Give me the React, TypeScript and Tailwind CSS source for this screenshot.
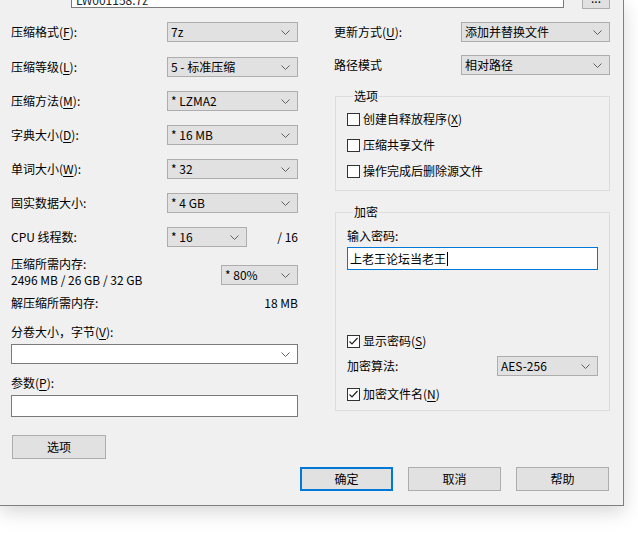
import React from "react";

const font = "font-['Noto_Sans_CJK_SC','Noto_Sans',sans-serif]";

function Chevron() {
    return (
        <svg width="9" height="5" viewBox="0 0 9 5" className="shrink-0">
            <polyline points="0.5,0.5 4.5,4.5 8.5,0.5" fill="none" stroke="#606060" strokeWidth="1" />
        </svg>
    );
}

function Combo({ value, width, white }: { value: string; width: string; white?: boolean }) {
    return (
        <div
            className={`flex items-center h-[20px] border pl-[3px] pr-[7px] ${width} ${
                white ? "bg-white border-[#7a7a7a]" : "bg-[#e1e1e1] border-[#adadad]"
            }`}
        >
            <span className="flex-1 whitespace-nowrap leading-[16px]">{value}</span>
            <Chevron />
        </div>
    );
}

function Key({ k }: { k: string }) {
    return (
        <>
            (<u className="underline-offset-2">{k}</u>)
        </>
    );
}

function CheckBox({ checked }: { checked?: boolean }) {
    return (
        <div className="w-[13px] h-[13px] border border-[#333333] bg-white shrink-0 flex items-center justify-center">
            {checked && (
                <svg width="11" height="11" viewBox="0 0 11 11">
                    <polyline points="1.5,5.5 4,8 9.5,2" fill="none" stroke="#222" strokeWidth="1.2" />
                </svg>
            )}
        </div>
    );
}

function CheckRow({ label, checked, className }: { label: React.ReactNode; checked?: boolean; className: string }) {
    return (
        <div className={`flex items-center h-[16px] gap-[3px] ${className}`}>
            <CheckBox checked={checked} />
            <span className="leading-[16px]">{label}</span>
        </div>
    );
}

function LeftRow({ label, value, className }: { label: React.ReactNode; value: string; className: string }) {
    return (
        <div className={`flex items-center h-[20px] ${className}`}>
            <span className="w-[156px] leading-[16px]">{label}</span>
            <Combo value={value} width="w-[131px]" />
        </div>
    );
}

function Button({ text, primary }: { text: string; primary?: boolean }) {
    return (
        <div
            className={`w-[93px] h-[24px] bg-[#e1e1e1] flex items-center justify-center ${
                primary ? "border-2 border-[#0078d7]" : "border border-[#adadad]"
            }`}
        >
            {text}
        </div>
    );
}

export default function App() {
    return (
        <div className={`w-[638px] h-[548px] bg-white overflow-hidden text-[12px] text-black ${font}`}>
            <div className="w-[624px] h-[506px] bg-[#f0f0f0] border-r border-b border-[#7f7f7f] shadow-[0_6px_18px_rgba(0,0,0,0.16)] overflow-hidden">
                {/* archive name row, mostly scrolled off */}
                <div className="flex items-end h-[20px] -mt-[12px]">
                    <div className="ml-[71px] w-[493px] h-[20px] bg-white border border-[#7a7a7a] flex items-end pl-[4px] pr-[8px]">
                        <span className="flex-1 leading-[14px] text-[#222]">LW001158.7z</span>
                        <span className="w-[2px] h-[2px] bg-[#555] mb-[9px]" />
                    </div>
                    <div className="ml-[18px] w-[28px] h-[22px] -mb-[1px] bg-[#e1e1e1] border border-[#adadad] flex items-end justify-center leading-[12px] pb-[4px]">
                        ...
                    </div>
                </div>

                <div className="flex">
                    {/* left column */}
                    <div className="ml-[11px] w-[287px] flex flex-col">
                        <LeftRow className="mt-[14px]" label={<>压缩格式<Key k="F" />:</>} value="7z" />
                        <LeftRow className="mt-[15px]" label={<>压缩等级<Key k="L" />:</>} value="5 - 标准压缩" />
                        <LeftRow className="mt-[14px]" label={<>压缩方法<Key k="M" />:</>} value="* LZMA2" />
                        <LeftRow className="mt-[14px]" label={<>字典大小<Key k="D" />:</>} value="* 16 MB" />
                        <LeftRow className="mt-[14px]" label={<>单词大小<Key k="W" />:</>} value="* 32" />
                        <LeftRow className="mt-[14px]" label="固实数据大小:" value="* 4 GB" />
                        <div className="flex items-center h-[20px] mt-[14px]">
                            <span className="w-[156px]">CPU 线程数:</span>
                            <Combo value="* 16" width="w-[80px]" />
                            <span className="ml-auto">/ 16</span>
                        </div>
                        <div className="flex items-start mt-[9px]">
                            <div className="flex flex-col leading-[16px]">
                                <span>压缩所需内存:</span>
                                <span>2496 MB / 26 GB / 32 GB</span>
                            </div>
                            <div className="ml-auto mt-[9px]">
                                <Combo value="* 80%" width="w-[77px]" />
                            </div>
                        </div>
                        <div className="flex items-center h-[16px] mt-[7px]">
                            <span>解压缩所需内存:</span>
                            <span className="ml-auto">18 MB</span>
                        </div>
                        <div className="flex items-center h-[16px] mt-[13px]">
                            分卷大小，字节<Key k="V" />:
                        </div>
                        <div className="mt-[4px]">
                            <Combo value="" width="w-[287px]" white />
                        </div>
                        <div className="flex items-center h-[16px] mt-[11px]">
                            参数<Key k="P" />:
                        </div>
                        <div className="mt-[4px] h-[22px] bg-white border border-[#7a7a7a]" />
                        <div className="mt-[18px] ml-[1px] w-[94px] h-[24px] bg-[#e1e1e1] border border-[#adadad] flex items-center justify-center">
                            选项
                        </div>
                    </div>

                    {/* right column */}
                    <div className="ml-[36px] w-[276px] flex flex-col">
                        <div className="flex items-center h-[20px] mt-[14px]">
                            <span className="w-[127px]">更新方式<Key k="U" />:</span>
                            <Combo value="添加并替换文件" width="w-[149px]" />
                        </div>
                        <div className="flex items-center h-[20px] mt-[13px]">
                            <span className="w-[127px]">路径模式</span>
                            <Combo value="相对路径" width="w-[149px]" />
                        </div>

                        <fieldset className="mt-[13px] ml-[1px] w-[275px] border border-[#dcdcdc] pl-[11px] pt-[7px] pb-[11px]">
                            <legend className="ml-[6px] px-[1px] leading-[16px]">选项</legend>
                            <CheckRow className="" label={<>创建自释放程序<Key k="X" /></>} />
                            <CheckRow className="mt-[10px]" label="压缩共享文件" />
                            <CheckRow className="mt-[10px]" label="操作完成后删除源文件" />
                        </fieldset>

                        <fieldset className="mt-[13px] ml-[1px] w-[275px] border border-[#dcdcdc] pl-[11px] pr-[11px] pt-[8px] pb-[8px]">
                            <legend className="ml-[6px] px-[1px] leading-[16px]">加密</legend>
                            <div className="flex items-center h-[16px]">输入密码:</div>
                            <div className="mt-[3px] w-[251px] h-[23px] bg-white border border-[#0078d7] flex items-center pl-[2px]">
                                <span className="leading-[16px]">上老王论坛当老王</span>
                                <span className="w-[1px] h-[14px] bg-black ml-[1px]" />
                            </div>
                            <CheckRow className="mt-[63px]" checked label={<>显示密码<Key k="S" /></>} />
                            <div className="flex items-center h-[20px] mt-[7px]">
                                <span className="w-[150px]">加密算法:</span>
                                <Combo value="AES-256" width="w-[101px]" />
                            </div>
                            <CheckRow className="mt-[10px]" checked label={<>加密文件名<Key k="N" /></>} />
                        </fieldset>
                    </div>
                </div>

                <div className="flex mt-[8px] ml-[300px] gap-[15px]">
                    <Button text="确定" primary />
                    <Button text="取消" />
                    <Button text="帮助" />
                </div>
            </div>
        </div>
    );
}
